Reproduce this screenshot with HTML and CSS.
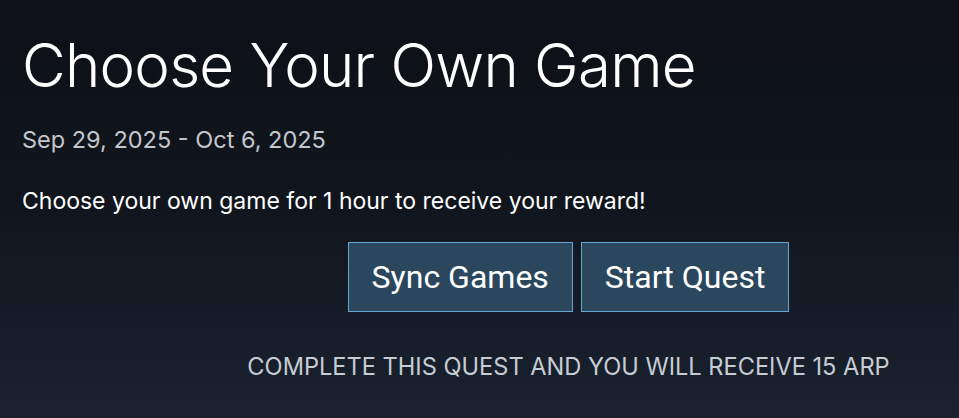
FILE: index.html
```html
<!DOCTYPE html>
<html lang="en">
<head>
  <meta charset="UTF-8" />
  <meta name="viewport" content="width=device-width, initial-scale=1.0"/>
  <title>Quest - Choose Your Own Game</title>
  <link rel="stylesheet" href="styles.css">
</head>
<body>
  <div class="quest">
    <h1>Choose Your Own Game</h1>
    <div class="dates">Sep 29, 2025 - Oct 6, 2025</div>
    <p class="desc">Choose your own game for 1 hour to receive your reward!</p>

    <div class="actions">
      <div class="buttons">
        <button>Sync Games</button>
        <button>Start Quest</button>
      </div>
      <div class="reward">COMPLETE THIS QUEST AND YOU WILL RECEIVE 15 ARP</div>
    </div>
  </div>
</body>
</html>
```

FILE: styles.css
```css
* {
  box-sizing: border-box;
  font-family: Inter, "Noto Sans", sans-serif;
}
body {
  margin: 0;
  padding: 0;
  height: 418px;
  overflow: hidden;
  background: linear-gradient(to bottom, #0d1016 0%, #11161e 50%, #1a2230 100%);
  color: white;
}
.quest { padding: 29px 0 0 22px; }
h1 {
  margin: 0;
  font-size: 60px;
  font-weight: 300;
  line-height: 72px;
  letter-spacing: -0.75px;
}
.dates {
  margin-top: 25px;
  font-size: 23.5px;
  line-height: 28px;
  color: #c3c6cb;
}
.desc {
  margin: 33px 0 0;
  font-size: 23px;
  line-height: 28px;
}
.actions {
  padding-left: 156px;
  text-align: center;
}
.buttons {
  display: flex;
  justify-content: center;
  gap: 8px;
  margin-top: 27px;
}
button {
  height: 70px;
  padding: 0 23px;
  background-color: #2a475e;
  border: 1px solid #66a6d4;
  color: white;
  font-family: Roboto, sans-serif;
  font-size: 32px;
  cursor: pointer;
}
.reward {
  margin-top: 42px;
  font-size: 23.6px;
  line-height: 26px;
  color: #c6ccd3;
}
```
